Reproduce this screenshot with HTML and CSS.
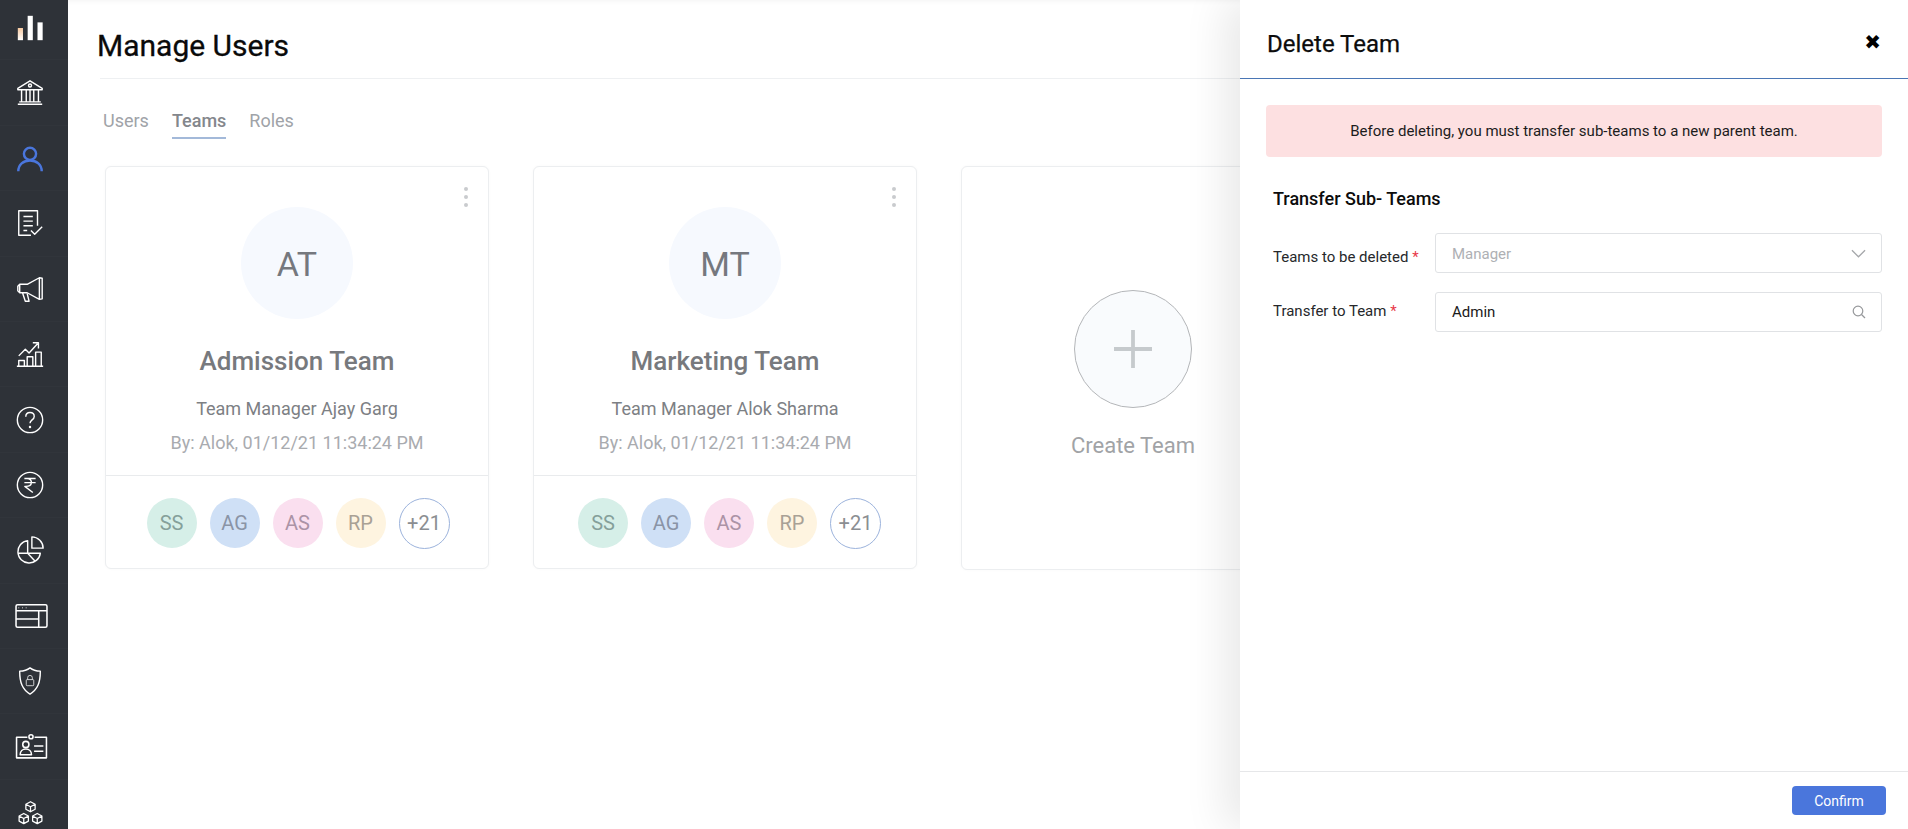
FILE: index.html
```html
<!DOCTYPE html>
<html lang="en">
<head>
<meta charset="utf-8">
<title>Manage Users</title>
<link rel="stylesheet" href="styles.css">
</head>
<body>
<div class="app">
  <nav class="sidebar">
    <a class="nav-item"><svg class="nav-icon" viewBox="0 0 32 32"><defs><linearGradient id="barA" x1="0" y1="0" x2="0" y2="1"><stop offset="0" stop-color="#f7c9a0"/><stop offset="1" stop-color="#fff"/></linearGradient></defs><rect x="3" y="16" width="5.5" height="13" fill="url(#barA)" stroke="none"/><rect x="13.5" y="3" width="5.5" height="26" fill="#fff" stroke="none"/><rect x="24" y="10" width="5.5" height="19" fill="#fff" stroke="none"/></svg></a>
    <a class="nav-item"><svg class="nav-icon" viewBox="0 0 32 32"><path d="M3 11 16 3l13 8v1.500H3zM3 28h26M4.500 25.500h23M7 13v12M12 13v12M16 13v12M20 13v12M25 13v12"/><circle cx="16" cy="8" r="1.600"/></svg></a>
    <a class="nav-item active"><svg class="nav-icon" viewBox="0 0 32 32"><circle cx="16" cy="10.500" r="6.500"/><path d="M3.500 29c0-7 5.500-11.500 12.500-11.500S28.500 22 28.500 29"/></svg></a>
    <a class="nav-item"><svg class="nav-icon" viewBox="0 0 32 32"><path d="M24 19V3H4v26h13M9 9h10M9 14h10M9 19h10M9 24h4M17 24l4 4 8-8"/></svg></a>
    <a class="nav-item"><svg class="nav-icon" viewBox="0 0 32 32"><path d="M26 4 13 11H5v9h8l13 7zM26 4l3 .5v22l-3 .5M5 11 3 13v5l2 2M8 20l3 9h4l-2-8"/></svg></a>
    <a class="nav-item"><svg class="nav-icon" viewBox="0 0 32 32"><path d="M2 29h28M4 29v-6h6v6M13 29V19h6v10M22 29V14h6v15M4 18 11 11l4 4 9-10M19 4h6v6"/></svg></a>
    <a class="nav-item"><svg class="nav-icon" viewBox="0 0 32 32"><circle cx="16" cy="16" r="13.500"/><path d="M11.500 12.500c0-3 2-4.500 4.500-4.500s4.500 1.700 4.500 4.200c0 3.800-4.500 3.600-4.500 7.300"/><circle class="dot" cx="16" cy="23.500" r="1.300"/></svg></a>
    <a class="nav-item"><svg class="nav-icon" viewBox="0 0 32 32"><circle cx="16" cy="16" r="13.500"/><path d="M10 9h12M10 13.500h12M13 9c6 0 6.500 8.500-1.500 8.500h-1L19 24"/></svg></a>
    <a class="nav-item"><svg class="nav-icon" viewBox="0 0 32 32"><path d="M13.500 6A12 12 0 1 0 27 19.500H13.500zM3 19.500h10.500l8.500 9"/><path d="M18 2a12 12 0 0 1 12 12H18z"/></svg></a>
    <a class="nav-item"><svg class="nav-icon wide" viewBox="0 0 32 24"><rect x="1" y="1" width="30" height="22" rx="1.500"/><path d="M1 7h22M23 7h8M23 7v16M1 15h22M3.500 4h.5M7 4h.5M10.500 4h.5"/></svg></a>
    <a class="nav-item"><svg class="nav-icon" viewBox="0 0 32 32"><path d="M16 2c3 2.500 7 3.500 11 3.500C27 18 24 25 16 30 8 25 5 18 5 5.500 9 5.500 13 4.500 16 2z"/><rect class="thin" x="12" y="14.500" width="8" height="6.500" rx="1"/><path class="thin" d="M13.500 14.500v-2a2.500 2.500 0 0 1 5 0v2"/></svg></a>
    <a class="nav-item"><svg class="nav-icon wide" viewBox="0 0 32 25"><path d="M12 4H1.500v20h29V4H19"/><circle cx="15.500" cy="3.500" r="2"/><circle cx="10.500" cy="11" r="3"/><path d="M5 21c0-3.500 2.500-5.500 5.500-5.500S16 17.500 16 21zM18.500 12.500h9M18.500 17.500h9"/></svg></a>
    <a class="nav-item"><svg class="nav-icon compact" viewBox="0 0 32 32"><path d="M16 2l5.500 3v6L16 14l-5.500-3V5zM10.500 5l5.500 3 5.500-3M16 8v6M8 16l5.500 3v6L8 28l-5.500-3v-6zM2.500 19 8 22l5.500-3M8 22v6M24 16l5.500 3v6L24 28l-5.500-3v-6zM18.500 19l5.500 3 5.500-3M24 22v6"/></svg></a>
  </nav>

  <main class="main">
    <h1 class="page-title">Manage Users</h1>
    <div class="tabs">
      <span class="tab">Users</span>
      <span class="tab tab-active">Teams</span>
      <span class="tab">Roles</span>
    </div>
    <section class="cards">
      <article class="card">
        <span class="kebab"><i></i><i></i><i></i></span>
        <div class="card-body">
          <div class="team-avatar">AT</div>
          <h2 class="team-name">Admission Team</h2>
          <p class="team-manager">Team Manager Ajay Garg</p>
          <p class="team-by">By: Alok, 01/12/21 11:34:24 PM</p>
        </div>
        <div class="members">
          <span class="member green">SS</span>
          <span class="member blue">AG</span>
          <span class="member pink">AS</span>
          <span class="member cream">RP</span>
          <span class="member more">+21</span>
        </div>
      </article>
      <article class="card">
        <span class="kebab"><i></i><i></i><i></i></span>
        <div class="card-body">
          <div class="team-avatar">MT</div>
          <h2 class="team-name">Marketing Team</h2>
          <p class="team-manager">Team Manager Alok Sharma</p>
          <p class="team-by">By: Alok, 01/12/21 11:34:24 PM</p>
        </div>
        <div class="members members-offset">
          <span class="member green">SS</span>
          <span class="member blue">AG</span>
          <span class="member pink">AS</span>
          <span class="member cream">RP</span>
          <span class="member more">+21</span>
        </div>
      </article>
      <article class="card card-create">
        <div class="create-circle"><svg class="plus" viewBox="0 0 40 40"><path d="M20 0v40M0 20h40"/></svg></div>
        <div class="create-label">Create Team</div>
      </article>
    </section>
  </main>

  <aside class="panel">
    <header class="panel-head">
      <h2 class="panel-title">Delete Team</h2>
      <span class="panel-close">&#10006;</span>
    </header>
    <div class="panel-body">
      <div class="alert">Before deleting, you must transfer sub-teams to a new parent team.</div>
      <h3 class="section-title">Transfer Sub- Teams</h3>
      <div class="field">
        <label class="field-label label-low">Teams to be deleted <b class="req">*</b></label>
        <div class="input input-muted">Manager
          <svg class="chev" viewBox="0 0 16 10"><path d="M1 1l7 7 7-7"/></svg>
        </div>
      </div>
      <div class="field">
        <label class="field-label label-high">Transfer to Team <b class="req">*</b></label>
        <div class="input">Admin
          <svg class="search" viewBox="0 0 14 14"><circle cx="6" cy="6" r="4.800"/><path d="M9.500 9.500 13 13"/></svg>
        </div>
      </div>
    </div>
    <footer class="panel-foot">
      <button class="btn-confirm">Confirm</button>
    </footer>
  </aside>
</div>
</body>
</html>
```
FILE: styles.css
```css
* { box-sizing: border-box; }
html, body { margin: 0; height: 100%; overflow: hidden; background: #fff; }
body { font-family: Roboto, "Liberation Sans", sans-serif; }
.app { display: flex; height: 829px; width: 1908px; position: relative; overflow: hidden; }

.sidebar { width: 68px; flex: none; background: #2e3238; display: flex; flex-direction: column; overflow: hidden; }
.nav-item { flex: none; height: 65.4px; display: flex; align-items: center; justify-content: center; padding-right: 8px; border-bottom: 1px solid #31353b; color: #fff; }
.nav-item:first-child { height: 60.4px; padding-bottom: 4px; }
.nav-item.active { color: #4a76dc; padding-top: 3px; }
.nav-icon { width: 30px; height: 30px; fill: none; stroke: currentColor; stroke-width: 1.5; stroke-linejoin: round; }
.nav-icon.wide { width: 33px; height: 26px; margin-left: 3px; }
.nav-icon.compact { width: 27px; height: 27px; margin-top: 3px; }
.nav-icon .dot { fill: currentColor; stroke: none; }
.nav-icon .thin { stroke-width: 1; opacity: .8; }
.nav-item.active .nav-icon { stroke-width: 2.6; }

.main { flex: 1; min-width: 0; padding: 28px 0 0 30px; box-shadow: inset 0 5px 5px -4px rgba(0,0,0,.05); }
.page-title { margin: 0 0 0 2px; font-size: 30px; line-height: 36px; font-weight: 400; -webkit-text-stroke: .3px #0a0a0a; color: #0a0a0a; padding-bottom: 14px; border-bottom: 1px solid #eef0f2; text-indent: -3px; }
.tabs { display: flex; gap: 23px; margin: 30px 0 0 5px; }
.tab { font-size: 18px; line-height: 24px; color: #a0a3a8; padding-bottom: 3px; border-bottom: 2px solid transparent; height: 30px; }
.tab-active { color: #84878c; font-weight: 500; border-bottom-color: #a3b9d9; }

.cards { display: flex; gap: 44px; margin: 27px 0 0 7px; }
.card { flex: none; width: 384px; height: 403px; border: 1px solid #eceef0; border-radius: 6px; position: relative; display: flex; flex-direction: column; background: #fff; box-shadow: 0 0 3px rgba(0,0,0,.03); }
.kebab { position: absolute; top: 20px; right: 20px; display: flex; flex-direction: column; gap: 4px; }
.kebab i { width: 4px; height: 4px; border-radius: 50%; background: #c9cbce; }
.card-body { height: 309px; padding-top: 40px; display: flex; flex-direction: column; align-items: center; border-bottom: 1px solid #e9ebed; }
.team-avatar { width: 112px; height: 112px; border-radius: 50%; background: #f6f9fe; color: #75787e; font-size: 34px; padding-top: 1px; display: flex; align-items: center; justify-content: center; }
.team-name { margin: 26px 0 0; font-size: 26px; line-height: 32px; font-weight: 500; color: #77797d; }
.team-manager { margin: 20px 0 0; font-size: 18px; line-height: 24px; color: #7d8084; }
.team-by { margin: 10px 0 0; font-size: 18px; line-height: 24px; color: #a9abaf; }
.members { flex: 1; display: flex; align-items: center; justify-content: center; gap: 13px; padding: 2px 0 0 2px; }
.members-offset { padding-left: 9px; }
.member { width: 50px; height: 50px; border-radius: 50%; display: flex; align-items: center; justify-content: center; font-size: 20px; color: #85888c; }
.green { background: #d6efe8; color: #85a09a; }
.blue { background: #cfe0f6; color: #8a94a6; }
.pink { background: #fadfef; color: #ab93a6; }
.cream { background: #fef4e0; color: #a9a195; }
.more { background: #fff; border: 1px solid #9cb3dc; color: #8b8e92; width: 51px; height: 51px; }

.card-create { height: 404px; align-items: center; padding: 123px 40px 0 0; }
.create-circle { width: 118px; height: 118px; border-radius: 50%; border: 1px solid #b4b6b9; background: #f9fbfd; display: flex; align-items: center; justify-content: center; }
.plus { width: 38px; height: 40px; fill: none; stroke: #c6cacd; stroke-width: 4; }
.create-label { margin-top: 23px; font-size: 22px; line-height: 30px; color: #a1a3a6; }

.panel { position: absolute; top: 0; right: 0; bottom: 0; width: 668px; background: #fff; display: flex; flex-direction: column; box-shadow: -15px 0 40px rgba(0,0,0,.09); }
.panel-head { height: 79px; flex: none; display: flex; align-items: center; justify-content: space-between; padding: 0 27px; border-bottom: 1px solid #4a76b5; }
.panel-title { margin: 9px 0 0; font-size: 24px; line-height: 32px; font-weight: 400; -webkit-text-stroke: .25px #0c0c0c; color: #0c0c0c; }
.panel-close { font-size: 20px; color: #000; margin-top: 6px; line-height: 20px; font-family: "DejaVu Sans", sans-serif; }
.panel-body { flex: 1; padding: 26px 26px 0; }
.alert { height: 52px; background: #fde0e1; border-radius: 4px; display: flex; align-items: center; justify-content: center; font-size: 15px; color: #1c1c1c; }
.section-title { margin: 30px 0 0 7px; font-size: 18px; line-height: 24px; font-weight: 500; color: #0c0c0c; }
.field { display: flex; align-items: center; height: 40px; margin-top: 19px; padding-left: 7px; }
.section-title + .field { margin-top: 22px; }
.field-label { width: 162px; flex: none; font-size: 15px; color: #26282b; }
.label-low { padding-top: 8px; }
.label-high { padding-bottom: 2px; }
.req { color: #e8394a; font-weight: 400; }
.input { flex: 1; height: 40px; border: 1px solid #e0e2e5; border-radius: 3px; display: flex; align-items: center; justify-content: space-between; padding: 0 15px 0 16px; font-size: 15px; color: #1a1a1a; }
.input-muted { color: #aeb0b4; padding-top: 1px; }
.chev { width: 15px; height: 10px; fill: none; stroke: #a5a7aa; stroke-width: 1.400; }
.search { width: 14px; height: 14px; fill: none; stroke: #96989b; stroke-width: 1.200; }
.panel-foot { height: 58px; flex: none; border-top: 1px solid #e6e7e9; display: flex; align-items: center; justify-content: flex-end; padding-right: 22px; }
.btn-confirm { width: 94px; height: 29px; border: 0; border-radius: 4px; background: #4a76dc; color: #fff; font: 400 14px Roboto, "Liberation Sans", sans-serif; }
```
